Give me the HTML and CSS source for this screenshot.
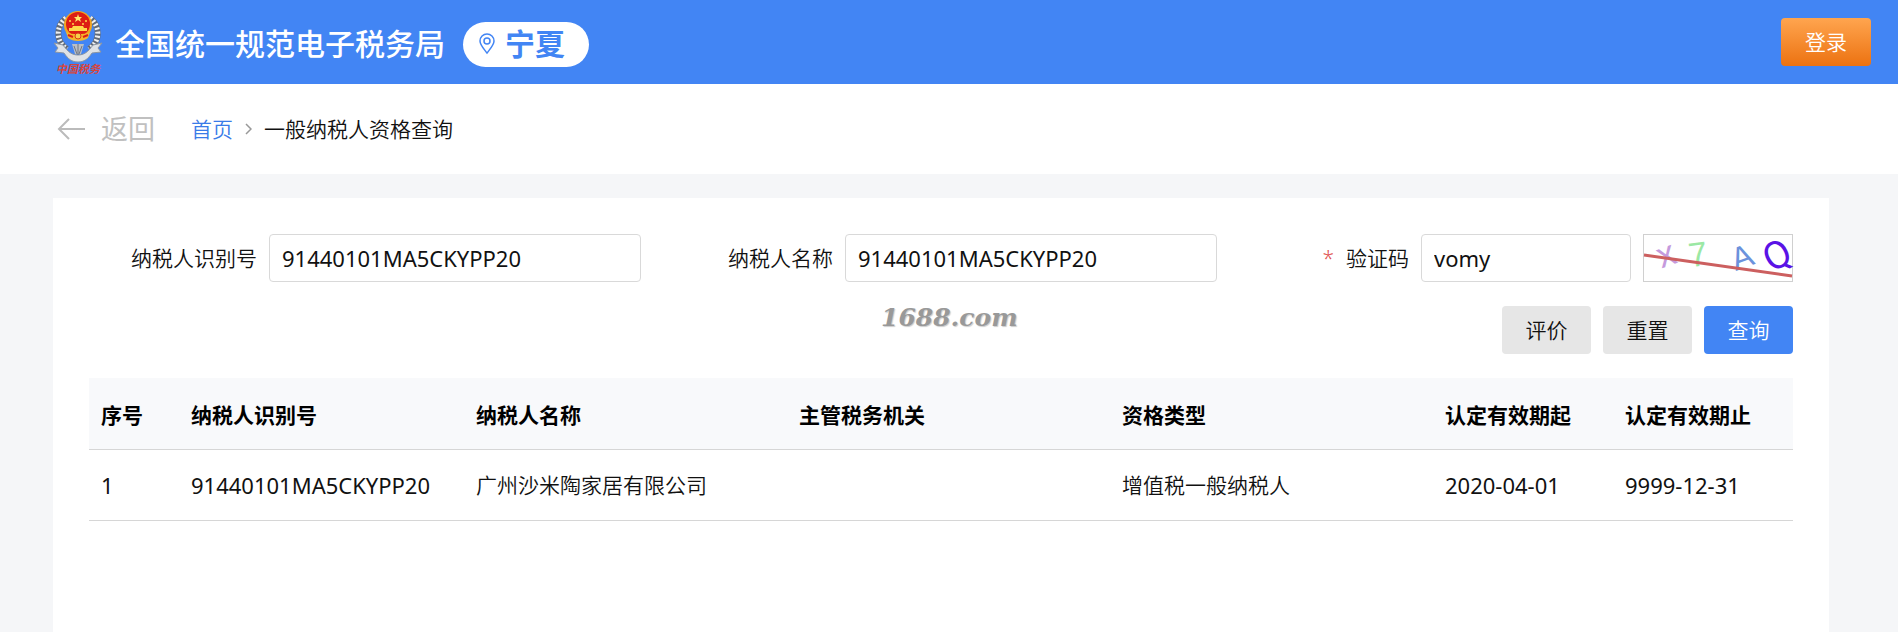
FILE: index.html
```html
<!DOCTYPE html>
<html lang="zh-CN">
<head>
    <meta charset="UTF-8">
    <title>一般纳税人资格查询</title>
    <link rel="stylesheet" href="styles.css">
</head>
<body>
    <header class="header">
        <div class="brand">
            <svg class="emblem" viewBox="0 0 50 68" width="50" height="68" aria-hidden="true">
                <!-- wheat ears -->
                <path d="M13 8C3 16 2 31 14 39M37 8c10 8 11 23-1 31" fill="none" stroke="#626b78" stroke-width="6"/>
                <path d="M13 8C3 16 2 31 14 39M37 8c10 8 11 23-1 31" fill="none" stroke="#eef0f2" stroke-width="5" stroke-dasharray="2 2"/>
                <!-- ribbon -->
                <path d="M1 33l9 2c5 7 9 10 15 10s10-3 15-10l9-2-4 5 3 4-9 1c-4 6-8 9-14 9s-10-3-14-9l-9-1 3-4z" fill="#dfe2e6" stroke="#8b95a3" stroke-width="1"/>
                <path d="M19 34h12l-3 10h-6z" fill="#b9bec6"/>
                <path d="M25 34v11M21 36l3 8M29 36l-3 8" stroke="#6f7783" stroke-width="1"/>
                <!-- national emblem -->
                <circle cx="25" cy="15" r="14" fill="#f2a51f"/>
                <circle cx="25" cy="14" r="12" fill="#dd1d14"/>
                <path d="M25 4l1 3h3l-2 2 1 3-3-2-3 2 1-3-2-2h3z" fill="#ffe66b"/>
                <g fill="#ffd84a">
                    <circle cx="17" cy="11" r="1"/>
                    <circle cx="20" cy="14" r="1"/>
                    <circle cx="30" cy="14" r="1"/>
                    <circle cx="33" cy="11" r="1"/>
                    <path d="M20 16h10l1 2h3v3H16v-3h3z"/>
                </g>
                <path d="M13 22c5 3 19 3 24 0l-2 6c-5 4-15 4-20 0z" fill="#f4b52b"/>
                <circle cx="25" cy="26" r="3" fill="#f6d04a" stroke="#d9361a"/>
                <path d="M15 25l5 2M35 25l-5 2" stroke="#dd1d14" stroke-width="2"/>
                <text class="emblem-text" x="3" y="63">中国税务</text>
            </svg>
            <h1 class="site-title">全国统一规范电子税务局</h1>
            <button type="button" class="region">
                <svg viewBox="0 0 16 22" width="16" height="22" aria-hidden="true">
                    <path d="M8 20C5 16 1 12 1 8a7 7 0 0 1 14 0c0 4-4 8-7 12z"/>
                    <circle cx="8" cy="8" r="3"/>
                </svg>
                <span>宁夏</span>
            </button>
        </div>
        <button type="button" class="login">登录</button>
    </header>

    <nav class="crumbs">
        <a href="#" class="back">
            <svg viewBox="0 0 28 22" width="28" height="22" aria-hidden="true">
                <path d="M12 1L2 11l10 10M2 11h26"/>
            </svg>
            <span>返回</span>
        </a>
        <a href="#" class="home">首页</a>
        <svg class="chevron" viewBox="0 0 8 12" width="8" height="12" aria-hidden="true">
            <path d="M2 1l5 5-5 5"/>
        </svg>
        <span>一般纳税人资格查询</span>
    </nav>

    <main class="card">
        <form class="query">
            <div class="fields">
                <div class="field">
                    <label for="taxId">纳税人识别号</label>
                    <input type="text" id="taxId" value="91440101MA5CKYPP20">
                </div>
                <div class="field">
                    <label for="taxName">纳税人名称</label>
                    <input type="text" id="taxName" value="91440101MA5CKYPP20">
                </div>
                <div class="field">
                    <label for="code"><span class="required">*</span>验证码</label>
                    <input type="text" id="code" value="vomy">
                    <svg class="captcha" viewBox="0 0 148 46" role="img" aria-label="验证码图片">
                        <text x="23" y="31" font-size="36" fill="#c59add" transform="rotate(-20 23 22)">x</text>
                        <text x="54" y="31" font-size="34" fill="#9be8a4" transform="rotate(-8 54 20)">7</text>
                        <text x="98" y="33" font-size="32" fill="#6b92dc" transform="rotate(-20 98 22)">A</text>
                        <text class="narrow" x="133" y="33" font-size="37" fill="#5a12e6" transform="rotate(-28 133 20)">Q</text>
                        <path d="M0 20L148 41" stroke="#cc5f5f" stroke-width="3"/>
                    </svg>
                </div>
            </div>
            <div class="actions">
                <button type="button">评价</button>
                <button type="reset">重置</button>
                <button type="submit" class="primary">查询</button>
            </div>
        </form>

        <table class="result">
            <thead>
                <tr>
                    <th class="col-no">序号</th>
                    <th class="col-id">纳税人识别号</th>
                    <th>纳税人名称</th>
                    <th>主管税务机关</th>
                    <th>资格类型</th>
                    <th class="col-date">认定有效期起</th>
                    <th class="col-date">认定有效期止</th>
                </tr>
            </thead>
            <tbody>
                <tr>
                    <td class="num">1</td>
                    <td class="num">91440101MA5CKYPP20</td>
                    <td>广州沙米陶家居有限公司</td>
                    <td></td>
                    <td>增值税一般纳税人</td>
                    <td class="num">2020-04-01</td>
                    <td class="num">9999-12-31</td>
                </tr>
            </tbody>
        </table>

        <div class="watermark">1688.com</div>
    </main>
</body>
</html>
```
FILE: styles.css
```css
* {
    box-sizing: border-box;
}

body {
    margin: 0;
    min-height: 100vh;
    display: flex;
    flex-direction: column;
    background: #f5f6f8;
    color: #111;
    font-family: "Noto Sans", "Noto Sans CJK SC", sans-serif;
    font-size: 21px;
    font-weight: 350;
    line-height: 30px;
}

button, input {
    font: inherit;
    color: inherit;
}

button {
    border: 0;
    padding: 0;
    cursor: pointer;
}

a {
    text-decoration: none;
}

/* Header */
.header {
    display: flex;
    align-items: center;
    justify-content: space-between;
    height: 84px;
    padding: 0 27px 0 53px;
    background: #4285f4;
    color: #fff;
}

.brand {
    display: flex;
    align-items: center;
    padding-top: 4px;
}

.emblem {
    margin-right: 12px;
}

.emblem-text {
    font-size: 11px;
    font-style: italic;
    font-weight: bold;
    fill: #d8443a;
}

.site-title {
    margin: 0;
    font-size: 30px;
    font-weight: 500;
}

.region {
    display: flex;
    align-items: center;
    gap: 10px;
    height: 45px;
    margin-left: 18px;
    padding: 0 24px 0 16px;
    border-radius: 24px;
    background: #fff;
    color: #4285f4;
    font-size: 30px;
    font-weight: bold;
}

.region svg {
    fill: none;
    stroke: #4285f4;
    stroke-width: 1.5;
}

.login {
    width: 90px;
    height: 48px;
    border-radius: 4px;
    background: linear-gradient(#ffa54f, #ec7211);
}

/* Breadcrumb */
.crumbs {
    display: flex;
    align-items: center;
    height: 90px;
    padding: 0 57px;
    background: #fff;
}

.back {
    display: flex;
    align-items: center;
    gap: 16px;
    margin-right: 36px;
    color: #c0c0c0;
    font-size: 27px;
    font-weight: 400;
}

.crumbs svg {
    fill: none;
    stroke: #bbb;
    stroke-width: 2;
}

.home {
    color: #3a7be8;
}

.crumbs .chevron {
    margin: 0 12px 0 11px;
    stroke: #999;
    stroke-width: 1.5;
}

/* Query card */
.card {
    position: relative;
    flex: 1;
    margin: 24px 69px 0 53px;
    padding: 36px;
    background: #fff;
}

.fields {
    display: grid;
    grid-template-columns: repeat(3, minmax(0, 1fr));
    gap: 24px;
}

.field {
    display: flex;
    align-items: center;
    gap: 12px;
}

.field label {
    width: 168px;
    flex-shrink: 0;
    text-align: right;
}

.field input {
    flex: 1;
    min-width: 0;
    height: 48px;
    padding: 0 12px;
    border: 1px solid #d9d9d9;
    border-radius: 4px;
    background: #fff;
    font-size: 22px;
    font-weight: 400;
}

.required {
    margin-right: 12px;
    color: #e0524f;
}

.captcha {
    width: 150px;
    height: 48px;
    flex-shrink: 0;
    border: 1px solid #d0d0d0;
    overflow: visible;
    font-family: "Liberation Sans", sans-serif;
    text-anchor: middle;
}

.captcha .narrow {
    font-family: "Liberation Sans Narrow", "DejaVu Sans Condensed", sans-serif;
    font-weight: 400;
}

.actions {
    display: flex;
    justify-content: flex-end;
    gap: 12px;
    margin-top: 24px;
}

.actions button {
    width: 89px;
    height: 48px;
    border-radius: 4px;
    background: #e6e6e6;
}

.actions .primary {
    background: #4285f4;
    color: #fff;
}

/* Result table */
.result {
    width: 100%;
    margin-top: 24px;
    border-collapse: separate;
    border-spacing: 0;
    table-layout: fixed;
}

.result th,
.result td {
    padding: 20px 12px;
    border-bottom: 1px solid #d6d6d6;
    text-align: left;
}

.result th {
    padding: 22px 12px 19px;
    background: #f8f9fb;
    color: #000;
}

.result .num {
    font-size: 22px;
    font-weight: 400;
}

.col-no {
    width: 90px;
}

.col-id {
    width: 285px;
}

.col-date {
    width: 180px;
}

.watermark {
    position: absolute;
    top: 105px;
    left: 50%;
    margin-left: -60px;
    color: #999;
    font-family: "DejaVu Serif", serif;
    font-size: 25px;
    font-style: italic;
    font-weight: bold;
    text-shadow: 1px 1px 1px #ccc;
    pointer-events: none;
}
```
